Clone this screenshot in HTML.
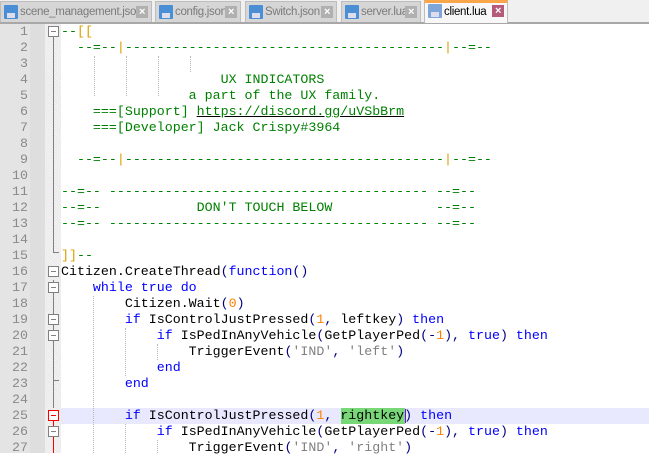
<!DOCTYPE html>
<html><head><style>
*{margin:0;padding:0;box-sizing:border-box}
body{width:649px;height:453px;overflow:hidden;background:#fff;font-family:"Liberation Sans",sans-serif;position:relative}
#tabs{position:absolute;left:0;top:0;width:649px;height:24px;background:#f0f0f0;border-bottom:2px solid #a8a8a8}
.tab{position:absolute;top:1px;height:21px;background:#d6d6d6;border:1px solid #bdbdbd;border-bottom:none;font-size:11.5px;letter-spacing:-0.3px;white-space:nowrap;overflow:hidden;color:#7a7a7a;line-height:20px;padding-left:19px}
.tab.act{background:#f7f7f7;color:#000;border-top:3px solid #f9a64a;top:0;height:23px;line-height:19px}
.ic{position:absolute;left:3px;top:3px;width:14px;height:14px;background:#4a8fd6;border-radius:1px}
.ic:after{content:"";position:absolute;left:3px;top:8px;width:8px;height:5px;background:#dde}
.act .ic{background:#7fa6d8;top:1px}
.x{position:absolute;right:3px;top:4px;width:12px;height:12px;background:#b0b0b0;color:#fff;font-size:11px;line-height:12px;text-align:center;font-weight:bold}
.act .x{background:#b45a7a;top:2px}
#ln{position:absolute;left:0;top:24px;width:45px;height:429px;background:#e4e4e4}
#ln2{position:absolute;left:30px;top:24px;width:15px;height:429px;background:#dedede}
#fold{position:absolute;left:45px;top:24px;width:16px;height:429px;background:repeating-linear-gradient(45deg,#f4f4f4 0 1px,#e8e8e8 1px 2px)}
.n{position:absolute;left:0;width:28px;text-align:right;font:13.3px "Liberation Mono",monospace;color:#8a8a8a;height:16px;line-height:16px}
.l{position:absolute;left:61px;height:16px;line-height:16px;font:13.3px "Liberation Mono",monospace;white-space:pre;color:#000}
.c{color:#008000}.y{color:#d8a000}.k{color:#0000ff}.o{color:#000080}.num{color:#ff8000}.s{color:#808080}
.fb{position:absolute;left:48px;width:11px;height:11px;border:1px solid #808080;background:#fff}
.fb:after{content:"";position:absolute;left:2px;top:4px;width:5px;height:1px;background:#808080}
.fb.r{border-color:#f00}.fb.r:after{background:#f00}
.vl{position:absolute;left:53px;width:1px;background:#808080}
.g{position:absolute;width:0;border-left:1px dotted #b8b8b8}
a{color:#008000;text-decoration:underline;text-decoration-color:#000}
</style></head><body>
<div id="tabs">
<div class="tab" style="left:0;width:152px"><span class="ic"></span>scene_management.json<span class="x">×</span></div>
<div class="tab" style="left:155px;width:86px"><span class="ic"></span>config.json<span class="x">×</span></div>
<div class="tab" style="left:245px;width:92px"><span class="ic"></span>Switch.json<span class="x">×</span></div>
<div class="tab" style="left:341px;width:80px"><span class="ic"></span>server.lua<span class="x">×</span></div>
<div class="tab act" style="left:424px;width:84px"><span class="ic"></span>client.lua<span class="x">×</span></div>
</div>
<div id="ln"></div><div id="ln2"></div><div id="fold"></div>
<div style="position:absolute;left:61px;top:408px;width:588px;height:16px;background:#e8e8ff"></div>
<div style="position:absolute;left:341px;top:408px;width:64px;height:16px;background:#78d878"></div>
<div style="position:absolute;left:405px;top:409px;width:1px;height:14px;background:#8000ff"></div>

<div class="vl" style="top:36px;height:216px"></div>
<div style="position:absolute;left:53px;top:252px;width:6px;height:1px;background:#808080"></div>
<div class="vl" style="top:280px;height:128px"></div>
<div style="position:absolute;left:53px;top:380px;width:6px;height:1px;background:#808080"></div>
<div class="vl" style="top:420px;height:33px;background:#f00"></div>
<div class="fb" style="top:26px"></div>
<div class="fb" style="top:266px"></div>
<div class="fb" style="top:282px"></div>
<div class="fb" style="top:314px"></div>
<div class="fb" style="top:330px"></div>
<div class="fb r" style="top:410px"></div>
<div class="fb" style="top:426px"></div>

<div class="g" style="left:94px;top:56px;height:40px"></div>
<div class="g" style="left:126px;top:56px;height:40px"></div>
<div class="g" style="left:158px;top:56px;height:40px"></div>
<div class="g" style="left:190px;top:56px;height:16px"></div>
<div class="g" style="left:93px;top:296px;height:157px"></div>
<div class="g" style="left:125px;top:328px;height:48px"></div>
<div class="g" style="left:125px;top:424px;height:29px"></div>
<div class="g" style="left:157px;top:344px;height:16px"></div>
<div class="g" style="left:157px;top:440px;height:13px"></div>

<div class="n" style="top:24px">1</div><div class="n" style="top:40px">2</div><div class="n" style="top:56px">3</div><div class="n" style="top:72px">4</div><div class="n" style="top:88px">5</div><div class="n" style="top:104px">6</div><div class="n" style="top:120px">7</div><div class="n" style="top:136px">8</div><div class="n" style="top:152px">9</div><div class="n" style="top:168px">10</div><div class="n" style="top:184px">11</div><div class="n" style="top:200px">12</div><div class="n" style="top:216px">13</div><div class="n" style="top:232px">14</div><div class="n" style="top:248px">15</div><div class="n" style="top:264px">16</div><div class="n" style="top:280px">17</div><div class="n" style="top:296px">18</div><div class="n" style="top:312px">19</div><div class="n" style="top:328px">20</div><div class="n" style="top:344px">21</div><div class="n" style="top:360px">22</div><div class="n" style="top:376px">23</div><div class="n" style="top:392px">24</div><div class="n" style="top:408px">25</div><div class="n" style="top:424px">26</div><div class="n" style="top:440px">27</div>

<div class="l c" style="top:24px">--<span class="y">[[</span></div>
<div class="l c" style="top:40px">  --=--<span class="y">|</span>----------------------------------------<span class="y">|</span>--=--</div>
<div class="l c" style="top:72px">                    UX INDICATORS</div>
<div class="l c" style="top:88px">                a part of the UX family.</div>
<div class="l c" style="top:104px">    ===[Support] <a>https://discord.gg/uVSbBrm</a></div>
<div class="l c" style="top:120px">    ===[Developer] Jack Crispy#3964</div>
<div class="l c" style="top:152px">  --=--<span class="y">|</span>----------------------------------------<span class="y">|</span>--=--</div>
<div class="l c" style="top:184px">--=-- ---------------------------------------- --=--</div>
<div class="l c" style="top:200px">--=--            DON'T TOUCH BELOW             --=--</div>
<div class="l c" style="top:216px">--=-- ---------------------------------------- --=--</div>
<div class="l c" style="top:248px"><span class="y">]]</span>--</div>
<div class="l" style="top:264px">Citizen.CreateThread<span class="o">(</span><span class="k">function</span><span class="o">()</span></div>
<div class="l" style="top:280px">    <span class="k">while true do</span></div>
<div class="l" style="top:296px">        Citizen.Wait<span class="o">(</span><span class="num">0</span><span class="o">)</span></div>
<div class="l" style="top:312px">        <span class="k">if</span> IsControlJustPressed<span class="o">(</span><span class="num">1</span><span class="o">,</span> leftkey<span class="o">)</span> <span class="k">then</span></div>
<div class="l" style="top:328px">            <span class="k">if</span> IsPedInAnyVehicle<span class="o">(</span>GetPlayerPed<span class="o">(-</span><span class="num">1</span><span class="o">),</span> <span class="k">true</span><span class="o">)</span> <span class="k">then</span></div>
<div class="l" style="top:344px">                TriggerEvent<span class="o">(</span><span class="s">'IND'</span><span class="o">,</span> <span class="s">'left'</span><span class="o">)</span></div>
<div class="l" style="top:360px">            <span class="k">end</span></div>
<div class="l" style="top:376px">        <span class="k">end</span></div>
<div class="l" style="top:408px">        <span class="k">if</span> IsControlJustPressed<span class="o">(</span><span class="num">1</span><span class="o">,</span> rightkey<span class="o">)</span> <span class="k">then</span></div>
<div class="l" style="top:424px">            <span class="k">if</span> IsPedInAnyVehicle<span class="o">(</span>GetPlayerPed<span class="o">(-</span><span class="num">1</span><span class="o">),</span> <span class="k">true</span><span class="o">)</span> <span class="k">then</span></div>
<div class="l" style="top:440px">                TriggerEvent<span class="o">(</span><span class="s">'IND'</span><span class="o">,</span> <span class="s">'right'</span><span class="o">)</span></div>
</body></html>
